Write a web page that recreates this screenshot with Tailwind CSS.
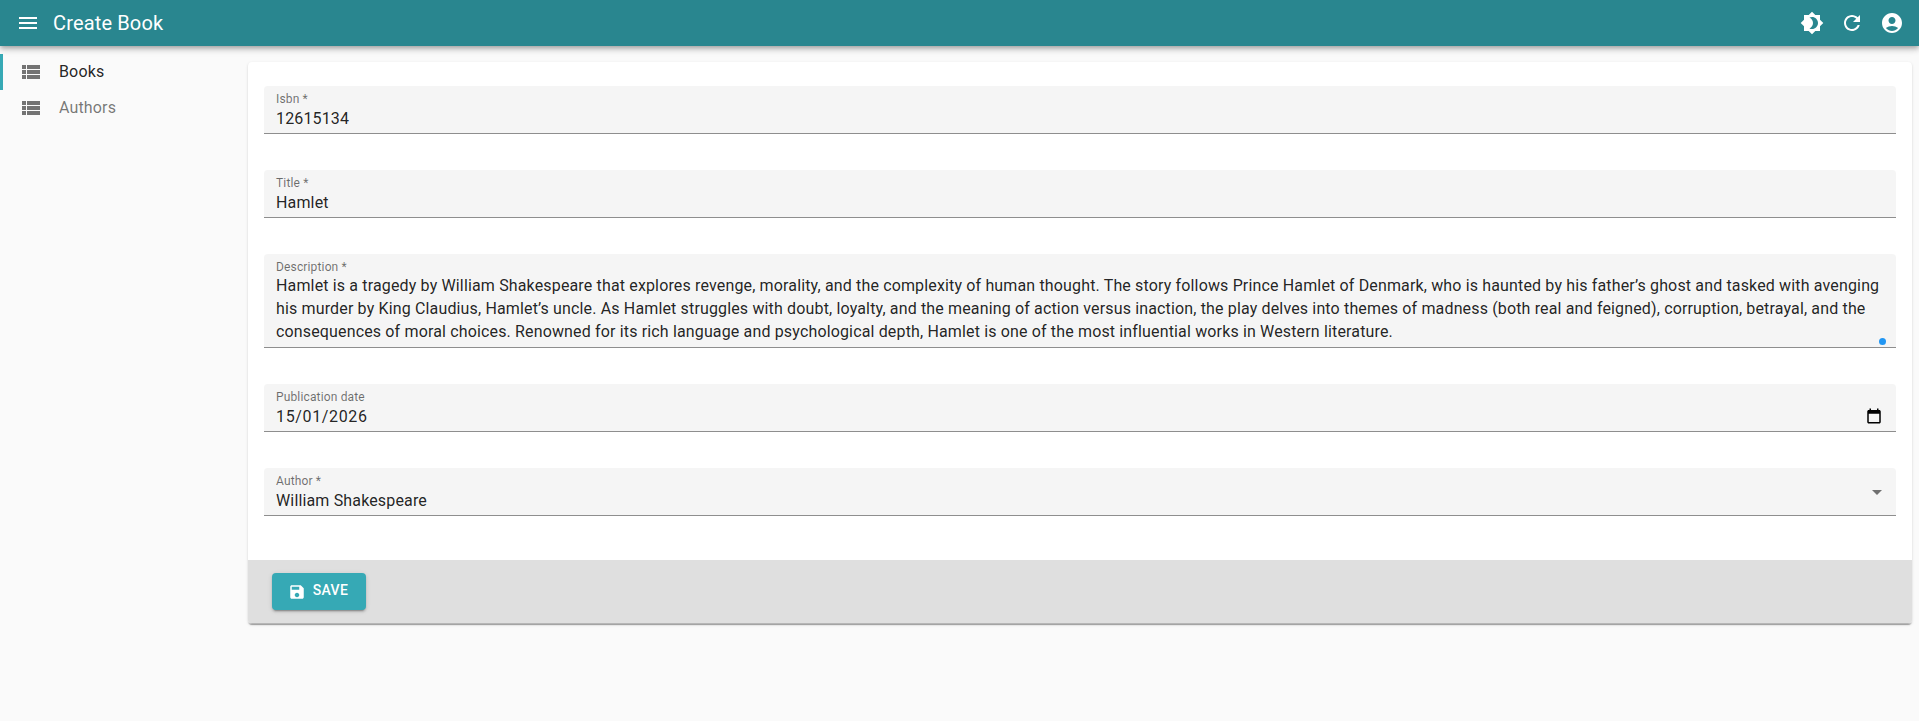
<!DOCTYPE html>
<html lang="en">
<head>
    <meta charset="UTF-8">
    <title>Create Book</title>
    <script src="https://cdn.jsdelivr.net/npm/@tailwindcss/browser@4"></script>
</head>
<body class="bg-[#fafafa] font-['Roboto',sans-serif] text-[#000000de] h-[721px] overflow-hidden">
    <!-- app bar -->
    <header class="relative z-10 h-[46px] bg-[#29868f] text-white flex items-center pl-[16px] pr-[15px] shadow-[0_2px_4px_-1px_rgba(0,0,0,0.2),0_4px_5px_0_rgba(0,0,0,0.14),0_1px_10px_0_rgba(0,0,0,0.12)]">
        <svg class="w-6 h-6 shrink-0 mr-[5px]" viewBox="0 0 24 24" fill="currentColor"><path d="M3 18h18v-2H3zm0-5h18v-2H3zm0-7v2h18V6z"/></svg>
        <h1 class="ml-[8px] text-[20px] leading-[46px] tracking-[0.15px] font-normal">Create Book</h1>
        <div class="ml-auto flex items-center gap-[16px]">
            <svg class="w-6 h-6" viewBox="0 0 24 24" fill="currentColor"><path d="M20 8.69V4h-4.69L12 .69 8.69 4H4v4.69L.69 12 4 15.31V20h4.69L12 23.31 15.31 20H20v-4.69L23.31 12zM12 18c-.89 0-1.74-.2-2.5-.55C11.56 16.5 13 14.42 13 12s-1.44-4.5-3.5-5.45C10.26 6.2 11.11 6 12 6c3.31 0 6 2.69 6 6s-2.69 6-6 6"/></svg>
            <svg class="w-6 h-6" viewBox="0 0 24 24" fill="currentColor"><path d="M17.65 6.35C16.2 4.9 14.21 4 12 4c-4.42 0-7.99 3.58-7.99 8s3.57 8 7.99 8c3.73 0 6.84-2.55 7.73-6h-2.08c-.82 2.33-3.04 4-5.65 4-3.31 0-6-2.69-6-6s2.69-6 6-6c1.66 0 3.14.69 4.22 1.78L13 11h7V4z"/></svg>
            <svg class="w-6 h-6" viewBox="0 0 24 24" fill="currentColor"><path d="M12 2C6.48 2 2 6.48 2 12s4.48 10 10 10 10-4.48 10-10S17.52 2 12 2m0 4c1.93 0 3.5 1.57 3.5 3.5S13.93 13 12 13s-3.5-1.57-3.5-3.5S10.07 6 12 6m0 14c-2.03 0-4.43-.82-6.14-2.88C7.55 15.8 9.68 15 12 15s4.45.8 6.14 2.12C16.43 19.18 14.03 20 12 20"/></svg>
        </div>
    </header>

    <div class="flex">
        <!-- sidebar -->
        <nav class="w-[248px] shrink-0 pt-[8px]">
            <a class="h-[36px] flex items-center pl-[16px] border-l-[3px] border-[#36a9b5] text-[#000000de] text-[16px] tracking-[0.15px]">
                <svg class="w-6 h-6 shrink-0 text-[#0000008a] mr-[16px]" viewBox="0 0 24 24" fill="currentColor"><path d="M3 14h4v-4H3zm0 5h4v-4H3zM3 9h4V5H3zm5 5h13v-4H8zm0 5h13v-4H8zM8 5v4h13V5z"/></svg>
                <span>Books</span>
            </a>
            <a class="h-[36px] flex items-center pl-[19px] text-[#0000008a] text-[16px] tracking-[0.15px]">
                <svg class="w-6 h-6 shrink-0 mr-[16px]" viewBox="0 0 24 24" fill="currentColor"><path d="M3 14h4v-4H3zm0 5h4v-4H3zM3 9h4V5H3zm5 5h13v-4H8zm0 5h13v-4H8zM8 5v4h13V5z"/></svg>
                <span>Authors</span>
            </a>
        </nav>

        <!-- form card -->
        <main class="w-[1664px] mt-[16px] bg-white rounded-[4px] overflow-hidden shadow-[0_2px_1px_-1px_rgba(0,0,0,0.2),0_1px_1px_0_rgba(0,0,0,0.14),0_1px_3px_0_rgba(0,0,0,0.12)]">
            <form class="pt-[24px] px-[16px] h-[498px] flex flex-col gap-[36px]">
                <div class="relative h-[48px] bg-[#f5f5f5] rounded-t-[4px] border-b border-[#0000006b] px-[12px] pt-[6px]">
                    <label class="block text-[12px] leading-[14px] tracking-[0.15px] text-[#0000008f]">Isbn *</label>
                    <input class="block w-full h-[25px] text-[16px] tracking-[0.15px] outline-none" value="12615134">
                </div>
                <div class="relative h-[48px] bg-[#f5f5f5] rounded-t-[4px] border-b border-[#0000006b] px-[12px] pt-[6px]">
                    <label class="block text-[12px] leading-[14px] tracking-[0.15px] text-[#0000008f]">Title *</label>
                    <input class="block w-full h-[25px] text-[16px] tracking-[0.15px] outline-none" value="Hamlet">
                </div>
                <div class="relative h-[94px] bg-[#f5f5f5] rounded-t-[4px] border-b border-[#0000006b] px-[12px] pt-[7px]">
                    <label class="block text-[12px] leading-[13px] tracking-[0.15px] text-[#0000008f]">Description *</label>
                    <p class="text-[16px] leading-[23px] tracking-[0.15px]">Hamlet is a tragedy by William Shakespeare that explores revenge, morality, and the complexity of human thought. The story follows Prince Hamlet of Denmark, who is haunted by his father’s ghost and tasked with avenging his murder by King Claudius, Hamlet’s uncle. As Hamlet struggles with doubt, loyalty, and the meaning of action versus inaction, the play delves into themes of madness (both real and feigned), corruption, betrayal, and the consequences of moral choices. Renowned for its rich language and psychological depth, Hamlet is one of the most influential works in Western literature.</p>
                    <span class="absolute right-[10px] bottom-[2px] w-[7px] h-[7px] rounded-full bg-[#2196f3]"></span>
                </div>
                <div class="relative h-[48px] bg-[#f5f5f5] rounded-t-[4px] border-b border-[#0000006b] px-[12px] pt-[6px]">
                    <label class="block text-[12px] leading-[14px] tracking-[0.15px] text-[#0000008f]">Publication date</label>
                    <div class="flex items-center h-[26px] justify-between">
                        <span class="text-[16px] tracking-[0.65px]">15/01/2026</span>
                        <svg class="w-[18px] h-[18px] mr-[1px] -mt-[3px] text-black" viewBox="0 0 24 24" fill="currentColor"><path d="M19 4h-1V2h-2v2H8V2H6v2H5c-1.1 0-2 .9-2 2v14c0 1.1.9 2 2 2h14c1.1 0 2-.9 2-2V6c0-1.1-.9-2-2-2zm0 16H5V9h14z"/></svg>
                    </div>
                </div>
                <div class="relative h-[48px] bg-[#f5f5f5] rounded-t-[4px] border-b border-[#0000006b] px-[12px] pt-[6px]">
                    <label class="block text-[12px] leading-[14px] tracking-[0.15px] text-[#0000008f]">Author *</label>
                    <div class="h-[26px] leading-[26px] text-[16px] tracking-[0.15px]">William Shakespeare</div>
                    <svg class="absolute right-[7px] top-[12px] w-6 h-6 text-[#0000008a]" viewBox="0 0 24 24" fill="currentColor"><path d="M7 10l5 5 5-5z"/></svg>
                </div>
            </form>
            <div class="h-[64px] bg-[#dfdfdf] flex items-center px-[24px] border-b border-[#0000002e]">
                <button class="h-[37px] w-[94px] bg-[#36a9b5] text-white rounded-[4px] flex items-center justify-center gap-[7px] text-[14px] font-medium leading-none tracking-[0.4px] shadow-[0_3px_1px_-2px_rgba(0,0,0,0.2),0_2px_2px_0_rgba(0,0,0,0.14),0_1px_5px_0_rgba(0,0,0,0.12)]">
                    <svg class="w-[18px] h-[18px] -ml-[2px]" viewBox="0 0 24 24" fill="currentColor"><path d="M17 3H5c-1.11 0-2 .9-2 2v14c0 1.1.89 2 2 2h14c1.1 0 2-.9 2-2V7zm-5 16c-1.66 0-3-1.34-3-3s1.34-3 3-3 3 1.34 3 3-1.34 3-3 3m3-10H5V5h10z"/></svg>
                    <span class="-mt-[4px]">SAVE</span>
                </button>
            </div>
        </main>
    </div>
</body>
</html>
